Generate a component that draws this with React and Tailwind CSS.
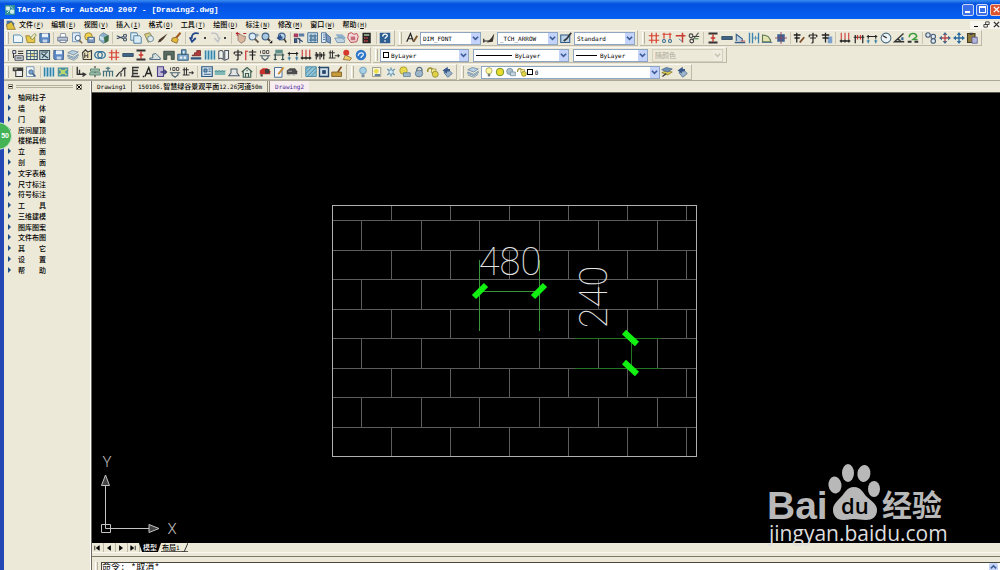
import React, { useState } from "react";

const ICONS = {
    file: <path d="M2 4h9l3 3v7H2z" fill="#eef6fb" stroke="#5d8fb5" strokeWidth="1.3" />,
    open: (
        <>
            <path d="M1 5h5l1 2h6v7H3z" fill="#e8c84a" stroke="#8a7526" />
            <path d="M7 8l6-6 2 2-5 6z" fill="#f7f2c8" stroke="#6b7a3a" />
        </>
    ),
    save: (
        <>
            <path d="M1 2h13v12H2l-1-1z" fill="#5d8ac4" stroke="#2f5486" />
            <path d="M4 2h8v5H4z" fill="#e9f1fa" />
            <path d="M5 10h6v4H5z" fill="#c5d4e8" />
        </>
    ),
    print: (
        <>
            <path d="M5 2h6l1 5H4z" fill="#fff" stroke="#6c7d95" />
            <path d="M1 7h13v5H1z" fill="#b9c3d4" stroke="#596a86" />
            <path d="M4 11h8v3H4z" fill="#f3f3f3" stroke="#596a86" />
        </>
    ),
    preview: (
        <>
            <path d="M2 1h10v12H2z" fill="#dcebf7" stroke="#5b7fa6" />
            <circle cx="9" cy="8" r="3.5" fill="#f5fbff" stroke="#45668c" strokeWidth="1.3" />
            <path d="M11 11l4 4" stroke="#7a6a3c" strokeWidth="2" />
        </>
    ),
    publish: (
        <>
            <circle cx="6" cy="6" r="5" fill="#f0d24e" stroke="#86712a" />
            <path d="M5 7h9v7H5z" fill="#7c99bd" stroke="#3d587d" />
            <path d="M7 9h5" stroke="#fff" strokeWidth="1.5" />
        </>
    ),
    globe: (
        <>
            <path d="M7 1l7 4-1 7-6 3-5-4V5z" fill="#8fb1c9" stroke="#567f9b" />
            <path d="M8 7l6-3v8l-5 3z" fill="#3c6f4c" />
            <path d="M2 5l5 2 1 4-5-1z" fill="#cfe3ef" />
        </>
    ),
    cut: (
        <g fill="none" stroke="#3c4d66" strokeWidth="1.5">
            <path d="M1 5l9 4M1 9l9-3" />
            <circle cx="12" cy="5" r="2" />
            <circle cx="12" cy="10" r="2" />
        </g>
    ),
    copy: (
        <g fill="#d9ebf5" stroke="#47789c" strokeWidth="1.2">
            <path d="M1 1h8l1 2v8H1z" />
            <path d="M5 5h8l2 2v8H5z" />
        </g>
    ),
    paste: (
        <>
            <path d="M2 3l7-2 5 8-7 5z" fill="#d8cf86" stroke="#7c7442" />
            <circle cx="10" cy="9" r="4" fill="#dfe9ee" stroke="#56798c" />
        </>
    ),
    brush: <path d="M14 2l-5 7-4 4-4 1 2-4 4-3z" fill="#4a3a2a" />,
    match: (
        <>
            <path d="M14 1l-6 7" stroke="#a0571f" strokeWidth="2.6" />
            <path d="M3 8l5-1 3 3-2 5-7-3z" fill="#e1b93b" stroke="#865a1f" />
        </>
    ),
    undo: <path d="M13 2C6 0 3 4 4 9M1 7l3 6 5-5" fill="none" stroke="#24478c" strokeWidth="2.4" />,
    redo: <path d="M3 2c7-2 10 2 9 7M15 7l-3 6-5-5" fill="none" stroke="#bdbfc6" strokeWidth="1.8" />,
    pan: (
        <>
            <path d="M4 4l3-1 3 2 4 1-1 6-5 3-4-4z" fill="#d9b9a0" stroke="#8b6a62" />
            <path d="M1 2h5M3 0v5M11 2h4" stroke="#b2292e" strokeWidth="1.6" />
        </>
    ),
    zoom: (
        <>
            <circle cx="6" cy="6" r="4.5" fill="#d8eaf6" stroke="#56789b" strokeWidth="1.5" />
            <path d="M9 9l5 5" stroke="#6a5a4c" strokeWidth="2.4" />
            <path d="M12 2v5M10 4h5" stroke="#56789b" />
        </>
    ),
    zoomWin: (
        <>
            <circle cx="6" cy="6" r="4.5" fill="#a9c7e0" stroke="#3f6289" strokeWidth="1.5" />
            <path d="M9 9l3 3" stroke="#4a4035" strokeWidth="2.4" />
            <path d="M15 11v4h-4z" fill="#111" />
        </>
    ),
    zoomPrev: (
        <>
            <circle cx="9" cy="6" r="4.5" fill="#b9d3e7" stroke="#3f6289" strokeWidth="1.5" />
            <path d="M12 9l3 5" stroke="#4a4035" strokeWidth="2" />
            <path d="M8 3L2 8l5 4V9h3V6H8z" fill="#2c4f8c" />
        </>
    ),
    props: (
        <>
            <path d="M1 2h6v5H1z" fill="#a63a5f" />
            <path d="M8 2h7v4H8z" fill="#5d7ca8" />
            <path d="M2 9h3v5H2zM6 8l7 5M9 8v7" fill="#47628a" stroke="#30486d" strokeWidth="1.4" />
        </>
    ),
    design: (
        <g stroke="#3e6c8f" strokeWidth="1.2" fill="#cde2ee">
            <path d="M1 1h13v13H1z" />
            <path d="M4 4h3v3H4zM9 4h3v3H9zM4 9h3v3H4zM9 9h3v3H9z" fill="#7ba1bd" />
        </g>
    ),
    palette: (
        <>
            <path d="M2 1h6v13H2z" fill="#dbe8f2" stroke="#385d8c" />
            <path d="M8 2l6 5v8l-5-2z" fill="#7996bd" stroke="#385d8c" />
            <path d="M4 4h3M4 7h3M4 10h3" stroke="#385d8c" />
        </>
    ),
    sheets: (
        <>
            <path d="M2 3h9l4 4v3H7z" fill="#8fb0cb" />
            <path d="M1 8h10l3 3v3H4z" fill="#c0d3e1" stroke="#6a8daa" />
        </>
    ),
    markup: (
        <>
            <path d="M2 2l4-1 3 2 4-1 2 4-2 7-8 1-4-6z" fill="#f3d9da" stroke="#bb4a50" strokeWidth="1.3" />
            <path d="M5 6h6v5H5z" fill="#c66e78" />
        </>
    ),
    calc: (
        <>
            <path d="M2 1h11v14H2z" fill="#242424" />
            <path d="M4 3h7v2H4z" fill="#a7c8a4" />
            <path d="M4 7h2v2H4zM7 7h2v2H7zM4 11h2v2H4zM7 11h2v2H7z" fill="#d24545" />
        </>
    ),
    help: (
        <>
            <path d="M1 1h14v14H1z" fill="#2d5f92" />
            <path d="M5 6c0-4 6-4 6-1 0 2-3 2-3 4M8 11v2" fill="none" stroke="#fff" strokeWidth="1.8" />
        </>
    ),
    fontStyle: (
        <>
            <path d="M1 13L6 2l4 11M3 9h6" fill="none" stroke="#222" strokeWidth="1.6" />
            <path d="M15 5l-5 8" stroke="#7a5830" strokeWidth="2.4" />
        </>
    ),
    dimStyle: (
        <>
            <path d="M1 12h7M1 9v5" stroke="#222" strokeWidth="1.6" />
            <path d="M15 2l-4 6-6 6 8-1 1-5z" fill="#3a332c" />
        </>
    ),
    tableStyle: (
        <>
            <path d="M1 4h12v10H1z" fill="#bcd3e8" stroke="#2f5a87" strokeWidth="1.4" />
            <path d="M15 1l-6 8-4 3" fill="none" stroke="#333" strokeWidth="2.2" />
        </>
    ),
    grid: <path d="M5 1v14M11 1v14M1 5h14M1 11h14" stroke="#d8402f" strokeWidth="1.6" />,
    gridDim: (
        <>
            <path d="M2 3h12M4 1v8M12 1v8" stroke="#d8402f" strokeWidth="1.6" />
            <circle cx="4" cy="12" r="2" fill="none" stroke="#356b94" strokeWidth="1.4" />
            <circle cx="12" cy="12" r="2" fill="none" stroke="#356b94" strokeWidth="1.4" />
        </>
    ),
    gridAdd: (
        <>
            <path d="M1 5h13M10 1v13" stroke="#c93a2f" strokeWidth="2" />
            <path d="M5 9l5 4" stroke="#356b94" />
        </>
    ),
    gridCut: (
        <g fill="none" stroke="#444" strokeWidth="1.5">
            <circle cx="4" cy="5" r="2.5" />
            <circle cx="5" cy="12" r="2.5" />
            <path d="M14 1L6 11M6 6h9" />
            <path d="M9 9h5" stroke="#3e8a4a" />
        </g>
    ),
    column: (
        <>
            <path d="M2 2h12M2 14h12" stroke="#333" strokeWidth="2.4" />
            <path d="M8 3v10M5 8h6" stroke="#c8342c" strokeWidth="1.8" />
        </>
    ),
    wall: <path d="M1 6h14v4H1z" fill="#3f6488" stroke="#263f58" />,
    door: (
        <>
            <path d="M1 13h14v2H1z" fill="#355d86" />
            <path d="M3 12V3l8 6v3" fill="#bdd1e4" stroke="#355d86" strokeWidth="1.4" />
            <path d="M9 12h6" stroke="#c33" />
        </>
    ),
    winH: (
        <>
            <path d="M2 1v14M6 1v14M14 1v14" stroke="#3d84b0" strokeWidth="1.8" />
            <path d="M6 8h8M10 5v6" stroke="#3d84b0" />
        </>
    ),
    arc: (
        <>
            <path d="M2 13V4c6 0 10 3 11 9z" fill="#e3e4b0" stroke="#5d7a54" strokeWidth="1.5" />
            <path d="M1 14h14" stroke="#355d86" />
        </>
    ),
    block: (
        <>
            <path d="M3 3h10v10H3z" fill="#3b6295" />
            <path d="M8 0v16M0 8h16" stroke="#8b4560" strokeWidth="1.2" />
        </>
    ),
    charPen: (
        <>
            <path d="M1 4h9M5 1v13M2 8h7" stroke="#222" strokeWidth="1.7" />
            <path d="M15 7l-6 7" stroke="#7a4a22" strokeWidth="2.4" />
        </>
    ),
    charZi: <path d="M3 4h10M8 1v13l-2 1M4 8h8M3 4v3M13 4v3" fill="none" stroke="#222" strokeWidth="1.6" />,
    charDoc: (
        <>
            <path d="M9 6h6v9H9z" fill="#7ca1cc" />
            <path d="M1 4h10M6 1v13M2 8h8" stroke="#222" strokeWidth="1.7" />
        </>
    ),
    axisDim: (
        <>
            <path d="M3 1v9M8 1v9M13 1v9" stroke="#c33" strokeWidth="1.4" />
            <path d="M1 12h14M3 10v4M8 10v4M13 10v4" stroke="#222" strokeWidth="1.7" />
        </>
    ),
    dimRed: (
        <>
            <path d="M1 7h14M3 4v11M13 4v11" stroke="#222" strokeWidth="1.6" />
            <path d="M6 4v6M10 4v6" stroke="#c33" strokeWidth="1.6" />
        </>
    ),
    dim: (
        <>
            <path d="M1 6h14M3 4v5M13 4v5" stroke="#222" strokeWidth="1.5" />
            <path d="M1 12h4M11 12h4M3 10v5M13 10v5" stroke="#357ba0" strokeWidth="1.6" />
        </>
    ),
    radius: (
        <>
            <circle cx="8" cy="8" r="6.5" fill="#edf4f7" stroke="#4d6c81" strokeWidth="1.4" />
            <path d="M4 5l5 3" stroke="#222" strokeWidth="1.6" />
        </>
    ),
    angle: (
        <>
            <path d="M14 2L2 13h13M6 10c3 0 4 2 4 4" fill="none" stroke="#333" strokeWidth="1.8" />
            <path d="M11 7h3v4h-3z" fill="#356b94" />
        </>
    ),
    refresh: (
        <>
            <path d="M3 7c0-6 9-7 10-1l-5 4h6" fill="none" stroke="#3b9c3d" strokeWidth="2" />
            <path d="M1 13h5M10 13h5" stroke="#333" strokeWidth="2.4" />
        </>
    ),
    circles: (
        <g fill="#e2e8ee" stroke="#465e79" strokeWidth="1.5">
            <circle cx="4" cy="4" r="3" />
            <circle cx="11" cy="6" r="3" />
            <circle cx="11" cy="12" r="3" />
        </g>
    ),
    moveRed: (
        <>
            <path d="M8 0l3 4H5zM8 16l3-4H5zM0 8l4-3v6zM16 8l-4-3v6z" fill="#356b94" />
            <path d="M8 3v10M3 8h10" stroke="#b94a50" strokeWidth="1.8" />
        </>
    ),
    moveBlue: (
        <>
            <path d="M8 0l3 4H5zM8 16l3-4H5zM0 8l4-3v6zM16 8l-4-3v6z" fill="#2a6a9e" />
            <path d="M8 3v10M3 8h10" stroke="#2a6a9e" strokeWidth="1.8" />
        </>
    ),
    clipboard: (
        <>
            <path d="M2 2h10v12H2z" fill="#8c7a3f" stroke="#463d23" strokeWidth="1.4" />
            <path d="M5 1h4v3H5z" fill="#444" />
            <path d="M8 7h7v8H8z" fill="#b3b6dc" stroke="#50548a" />
        </>
    ),
    list: (
        <>
            <path d="M1 2h4v4H1zM4 9h11v6H4z" fill="#dce6ee" stroke="#445" strokeWidth="1.3" />
            <path d="M8 3h7M8 6h7M6 12h7M2 6v6" stroke="#333" strokeWidth="1.4" />
        </>
    ),
    table: (
        <>
            <path d="M1 2h14v12H1z" fill="#e4efd5" stroke="#34506d" strokeWidth="1.5" />
            <path d="M6 2v12M11 2v12M1 6h14M1 10h14" stroke="#34506d" />
            <path d="M7 7h3v2H7z" fill="#d0b93c" />
        </>
    ),
    chart: (
        <>
            <path d="M1 2h13v12H1z" fill="#c2d8dd" stroke="#3a5060" strokeWidth="1.5" />
            <path d="M3 6l9 6M4 12l6-7M3 4h9" stroke="#2c4453" strokeWidth="1.5" />
        </>
    ),
    layers: (
        <g fill="#b9d0e2" stroke="#6484a1">
            <path d="M1 5l6-3 8 2-6 4z" />
            <path d="M1 8l8 3 6-4v2l-6 4-8-3z" />
            <path d="M1 12l8 3 6-4" fill="none" />
        </g>
    ),
    note: (
        <>
            <path d="M2 5l4-4 3 3 5-2v12H3z" fill="#ece0b6" stroke="#3d3d3d" strokeWidth="1.5" />
            <path d="M5 5v7M9 6v6M5 9h4" stroke="#3d3d3d" strokeWidth="1.3" />
        </>
    ),
    rings: (
        <g fill="none" stroke="#2b6c9a" strokeWidth="1.7">
            <ellipse cx="6" cy="8" rx="5" ry="4.5" />
            <ellipse cx="10" cy="8" rx="5" ry="4.5" />
        </g>
    ),
    section: <path d="M1 12h4V7l4-1 3 3 3 3v2H1z" fill="#d6e0df" stroke="#4d6a7d" strokeWidth="1.3" />,
    gate: <path d="M1 3h14v11h-4V8H5v6H1z" fill="#586b60" stroke="#2f3d35" />,
    house: (
        <>
            <path d="M1 7h14v8H1zM6 1h6v6H6z" fill="#83abc9" stroke="#36617f" strokeWidth="1.3" />
            <path d="M4 10h3v3H4zM9 10h3v3H9zM8 3h2v3H8z" fill="#e9f2f7" />
        </>
    ),
    stairs: (
        <>
            <path d="M1 11h14v3H1z" fill="#31557f" />
            <path d="M3 8h3V5h3V2h5v7H3z" fill="#b03a38" stroke="#6d2324" />
        </>
    ),
    columns: (
        <>
            <path d="M1 2h14v12H1z" fill="#a9d0e0" />
            <path d="M2 2v12M6 2v12M10 2v12M14 2v12" stroke="#3682a5" strokeWidth="1.7" />
        </>
    ),
    book: <path d="M1 3c3-2 5-1 6 1v10c-2-2-4-2-6-1zM9 2h5v11l-5 2z" fill="#eef0ee" stroke="#4c5662" strokeWidth="1.4" />,
    charTag: (
        <>
            <path d="M1 2v13M1 3h3" stroke="#c33" strokeWidth="1.6" />
            <path d="M5 4h10M10 1v14M6 8h8" stroke="#222" strokeWidth="1.6" />
        </>
    ),
    dimHund: (
        <>
            <path d="M2 2v4M5 2h3v4H5zM10 2h3v4h-3z" fill="none" stroke="#555" strokeWidth="1.3" />
            <path d="M1 9h14M4 9v3l4 3 4-3V9" fill="none" stroke="#4a6070" strokeWidth="1.5" />
        </>
    ),
    dimWin: (
        <>
            <path d="M3 1h10v5H3z" fill="#5e8f8a" />
            <path d="M1 8h14M3 6v9M13 6v9M1 14h4M11 14h4" stroke="#2e4d4b" strokeWidth="1.6" />
        </>
    ),
    dimRow: <path d="M1 8h14M3 4v10M8 4v10M13 4v10M5 6v5M10 6v5" stroke="#222" strokeWidth="1.5" />,
    leader: <path d="M1 5h8M3 2v10M6 2v10M1 12h9M9 9h6M13 7l2 2-2 2" fill="none" stroke="#333" strokeWidth="1.4" />,
    lamp: (
        <>
            <circle cx="7" cy="5" r="4" fill="#d7392c" />
            <path d="M6 8l8 4-2 3-9-1z" fill="#e9cf6a" stroke="#8c5a2b" />
        </>
    ),
    helpBall: (
        <>
            <circle cx="8" cy="8" r="7" fill="#2f76c8" />
            <path d="M4 9c2-6 8-4 7-1-1 2-3 1-3 4" fill="none" stroke="#e7f2fc" strokeWidth="1.7" />
        </>
    ),
    camera: (
        <>
            <path d="M1 2h14v5H1z" fill="#3a3a3a" />
            <path d="M5 6h9v8H5z" fill="#eee" stroke="#3a3a3a" strokeWidth="1.4" />
            <path d="M3 4h4" stroke="#e9e3c9" strokeWidth="1.4" />
        </>
    ),
    findDoc: (
        <>
            <path d="M2 1h10v13H2z" fill="#f4f8fb" stroke="#5a7ba0" />
            <circle cx="8" cy="8" r="3" fill="#77a3cc" stroke="#345a82" />
            <path d="M10 10l4 4" stroke="#345a82" strokeWidth="2" />
        </>
    ),
    star: (
        <>
            <path d="M1 2h14v12H1z" fill="#4d93a6" />
            <path d="M3 4l10 8M13 4L3 12" stroke="#d9e46c" strokeWidth="1.4" />
            <circle cx="8" cy="8" r="3" fill="#b6d86c" />
        </>
    ),
    coord: <path d="M3 1v10h10M6 5v6M10 9l4 2-4 3" fill="none" stroke="#333" strokeWidth="1.8" />,
    level: (
        <>
            <path d="M8 0v16" stroke="#333" strokeDasharray="3 1" strokeWidth="1.4" />
            <path d="M2 4h12v3H2zM1 9h14v3H1z" fill="#a8cbb8" stroke="#42735e" />
        </>
    ),
    comb: <path d="M1 7h14M2 7v7M6 7v7M10 7v7M14 7v7M8 1v6M5 3h6" stroke="#41707c" strokeWidth="1.6" />,
    slope: <path d="M1 14c3 0 3-5 6-6 3 0 3-5 7-6M8 9v5M13 3v11M10 3h5" fill="none" stroke="#333" strokeWidth="1.6" />,
    charE: <path d="M4 2h9M5 2v13M5 6h7M5 10h7M3 14h11" stroke="#333" strokeWidth="1.7" />,
    charA: <path d="M4 14L9 2l4 12M6 10h6M1 14h2" fill="none" stroke="#222" strokeWidth="1.8" />,
    exit: (
        <>
            <path d="M2 1h8v13H2z" fill="#c2b8d9" stroke="#4e4586" strokeWidth="1.5" />
            <path d="M6 8h8M11 5l3 3-3 3" fill="none" stroke="#3f3a7c" strokeWidth="1.7" />
        </>
    ),
    plan: (
        <>
            <path d="M1 1h14v13H1z" fill="#d3e2ee" stroke="#2d5a82" strokeWidth="1.6" />
            <path d="M4 4h4v4H4zM10 4h3M10 7h3M4 11h9" fill="#7fa5c4" stroke="#2d5a82" strokeWidth="1.3" />
        </>
    ),
    wave: (
        <>
            <path d="M1 6h14v6H1z" fill="#7fb9b6" />
            <path d="M1 8l2-2 2 2 2-2 2 2 2-2 2 2 2-2" fill="none" stroke="#3b7c80" />
        </>
    ),
    roof: <path d="M4 4h8v5l3 4H1l3-4z" fill="#e3e6e2" stroke="#4a5c6c" strokeWidth="1.4" />,
    home: <path d="M1 8l7-6 7 6M3 7v8h10V7M6 15v-5h4v5M8 5v2" fill="#e3ebe6" stroke="#3d5d4f" strokeWidth="1.5" />,
    car: (
        <>
            <path d="M1 6l4-3h6l4 4v4H1z" fill="#c8322c" />
            <path d="M8 4h6v6H8z" fill="#3d3d3d" />
            <path d="M2 11h3v3H2z" fill="#444" />
        </>
    ),
    edit: (
        <>
            <path d="M2 2h10v13H2z" fill="#f2f6fa" stroke="#4d7096" strokeWidth="1.3" />
            <path d="M14 2l-7 9" stroke="#c98b35" strokeWidth="2.6" />
        </>
    ),
    carDark: (
        <>
            <path d="M1 6l4-3h7l3 4v4H1z" fill="#4d4d4d" />
            <path d="M3 7h5M2 12h3M9 12h3" stroke="#a4a4a4" strokeWidth="1.6" />
        </>
    ),
    hatch: (
        <>
            <path d="M1 1h14v13H1z" fill="#8fc3d6" stroke="#3b7b9a" />
            <path d="M1 5l4-4M1 10l9-9M3 14L15 2M8 14l7-7" stroke="#3b7b9a" />
        </>
    ),
    frame: (
        <>
            <path d="M2 2h12v12H2z" fill="#cfe0ea" stroke="#27496b" strokeWidth="1.8" />
            <path d="M6 6h4v4H6zM0 2h4M2 0v4" fill="#27496b" stroke="#27496b" />
        </>
    ),
    sweep: (
        <>
            <path d="M14 1l-5 7" stroke="#7b4a1c" strokeWidth="2" />
            <path d="M1 8h13v6H1z" fill="#c59a3b" stroke="#74531c" />
        </>
    ),
    bulbBlue: (
        <>
            <circle cx="8" cy="6" r="4.5" fill="#a5d0e6" stroke="#5f92ad" />
            <path d="M6 11h4v4H6z" fill="#7c95a6" />
        </>
    ),
    bulbDoc: (
        <>
            <path d="M2 2h11v12H2z" fill="#f7f6ea" stroke="#85856a" />
            <circle cx="7" cy="7" r="3.3" fill="#eadf4a" />
            <path d="M5 12h7" stroke="#355d86" strokeWidth="2" />
        </>
    ),
    freeze: (
        <>
            <path d="M8 2v12M3 4l10 8M13 4L3 12" stroke="#5a8fb2" strokeWidth="1.6" />
            <circle cx="8" cy="8" r="3" fill="#d9eaf3" stroke="#5a8fb2" />
        </>
    ),
    sunLayer: (
        <>
            <circle cx="6" cy="6" r="5" fill="#e8d94c" stroke="#9b8f2b" />
            <path d="M6 9h9v5H6z" fill="#9fb9cc" stroke="#5d7c93" />
        </>
    ),
    vpLayer: (
        <>
            <circle cx="6" cy="7" r="5" fill="#a9bfca" stroke="#5b7a8a" />
            <path d="M7 8h8v6H7z" fill="#c9d8e0" stroke="#5b7a8a" />
        </>
    ),
    lock: (
        <>
            <path d="M5 7c-1-7 8-7 7 0" fill="none" stroke="#566f86" strokeWidth="1.8" />
            <ellipse cx="8" cy="10" rx="5" ry="4.5" fill="#9db7ca" stroke="#566f86" />
        </>
    ),
    unlock: (
        <>
            <path d="M1 8c-1-7 7-7 7-1" fill="none" stroke="#9b8f2b" strokeWidth="2" />
            <path d="M6 4h6v5H6z" fill="#f0e892" stroke="#9b8f2b" />
            <ellipse cx="11" cy="11" rx="4" ry="4" fill="#e0d246" stroke="#8d822b" />
        </>
    ),
    layerPrev: (
        <>
            <path d="M4 9l7-3 4 4-6 5z" fill="#9bb4cb" stroke="#47678b" />
            <path d="M9 1L2 6l6 4V7h4V4H9z" fill="#39598a" />
        </>
    ),
    layerSet: (
        <>
            <path d="M1 9l6-3 8 2-6 4z" fill="#d8c84c" stroke="#877a2f" />
            <path d="M1 5l6-3 8 2-6 4z" fill="#6e90b5" stroke="#46678b" />
            <path d="M2 14l5-4" stroke="#333" strokeWidth="1.6" />
        </>
    ),
    bulbOn: (
        <>
            <circle cx="8" cy="6" r="5" fill="#fbf7a0" stroke="#8c873a" />
            <path d="M6 11h4v4H6z" fill="#777" />
        </>
    ),
    sun: <circle cx="8" cy="8" r="6" fill="#e9dc2c" stroke="#6f8a26" strokeWidth="1.5" />,
};

const STANDARD =
    "file open save | print preview publish globe | cut copy paste brush match | undo . redo . | pan zoom zoomWin zoomPrev | props design palette sheets markup calc | help";
const TARCH_SHORTCUTS =
    "grid gridDim gridAdd gridCut | column wall door winH arc block | charPen charZi charDoc | axisDim dimRed dim radius angle refresh | circles moveRed moveBlue clipboard";
const TARCH_COMMON =
    "list table chart save layers note rings grid wall column section gate house stairs columns book charZi charTag dimHund dimWin dim axisDim dimRow leader lamp helpBall";
const TARCH_EXTRA =
    "camera findDoc | columns star | coord level comb slope charE charA exit dimHund leader | plan wave roof home | car edit carDark | hatch frame sweep";
const LAYER_TOOLS = "bulbBlue bulbDoc freeze sunLayer lock unlock layerPrev";

const MENUS = [
    ["文件", "F"],
    ["编辑", "E"],
    ["视图", "V"],
    ["插入", "I"],
    ["格式", "O"],
    ["工具", "T"],
    ["绘图", "D"],
    ["标注", "N"],
    ["修改", "M"],
    ["窗口", "W"],
    ["帮助", "H"],
];

const TREE = [
    "轴网柱子",
    "墙　　体",
    "门　　窗",
    "房间屋顶",
    "楼梯其他",
    "立　　面",
    "剖　　面",
    "文字表格",
    "尺寸标注",
    "符号标注",
    "工　　具",
    "三维建模",
    "图库图案",
    "文件布图",
    "其　　它",
    "设　　置",
    "帮　　助",
];

const DRAWINGS = ["Drawing1", "150106.智慧绿谷景观平面12.26河道50m", "Drawing2"];

// Latin runs are half as wide as the Chinese ones, as in the system bitmap font
const Text = ({ children }) =>
    children.split(/([\u3000-\u9fff]+)/).map((part, i) =>
        i % 2 ? (
            <span key={i} className="font-['Noto_Sans_CJK_SC',sans-serif] text-[7px] leading-[9px] font-medium">
                {part}
            </span>
        ) : (
            <span key={i} className="font-['DejaVu_Sans_Mono',monospace] text-[6px] leading-[9px]">
                {part}
            </span>
        )
    );

const Icon = ({ name }) => (
    <svg viewBox="0 0 16 16" className="h-3 w-3 shrink-0">
        {ICONS[name]}
    </svg>
);

const Tool = ({ name }) => (
    <button type="button" aria-label={name} className="flex h-full min-w-0 flex-1 items-center justify-center">
        <Icon name={name} />
    </button>
);

const Tools = ({ items }) => (
    <div className="flex min-w-0 flex-1 items-center self-stretch">
        {items.split(" ").map((name, i) => {
            if (name === "|") return <span key={i} className="mx-[2px] h-3 w-px shrink-0 bg-[#c9c5b2]" />;
            if (name === ".")
                return (
                    <button key={i} type="button" aria-label="history" className="w-[7px] shrink-0 text-center">
                        <span className="mx-auto block h-[2px] w-[2px] bg-[#444]" />
                    </button>
                );
            return <Tool key={i} name={name} />;
        })}
    </div>
);

const Toolbar = ({ className, children }) => (
    <div
        className={`flex h-4 shrink-0 items-center border-r border-b border-[#bdb9a6] border-t border-t-[#f8f7f0] pr-[2px] ${className}`}
    >
        <span className="mx-[2px] h-3 w-[3px] shrink-0 border-x border-l-white border-r-[#b5b19e]" />
        {children}
    </div>
);

const Select = ({ label, value, className, prefix, disabled }) => (
    <label
        className={`flex h-[13px] items-center border pl-[2px] ${
            disabled ? "border-[#d2cfbd] bg-[#ece9d8] text-[#aca899]" : "border-[#8fa6c2] bg-white text-black"
        } ${className}`}
    >
        {prefix}
        <select
            aria-label={label}
            disabled={disabled}
            className={`h-full min-w-0 flex-1 appearance-none bg-transparent ${
                disabled
                    ? "font-['Noto_Sans_CJK_SC',sans-serif] text-[7px]"
                    : "font-['DejaVu_Sans_Mono',monospace] text-[6px]"
            }`}
        >
            <option>{value}</option>
        </select>
        <span
            className={`flex h-full w-[9px] items-center justify-center ${disabled ? "bg-[#efecdf]" : "bg-[#c3d3fb]"}`}
        >
            <svg viewBox="0 0 8 8" className="h-[7px] w-[7px]">
                <path d="M1 2l3 3 3-3" fill="none" stroke={disabled ? "#c9c5b2" : "#3c5a94"} strokeWidth="1.8" />
            </svg>
        </span>
    </label>
);

const Swatch = () => <span className="mr-[2px] h-[6px] w-[6px] shrink-0 border border-black bg-white" />;

const Line = ({ className }) => <span className={`mr-[3px] h-px shrink-0 bg-black ${className}`} />;

const TitleBar = () => (
    <header className="flex h-[19px] shrink-0 items-center bg-linear-to-b from-[#3a8df0] via-[#0551e0] via-20% to-[#0660f4] pl-[5px]">
        <svg viewBox="0 0 16 16" className="h-[10px] w-[10px]">
            <path d="M0 0h16v16H0z" fill="#2f8f9a" />
            <path d="M2 3h5v5H2zM9 8h5v5H9zM9 2l4 4M3 13l4-4" fill="#d6efe9" stroke="#d6efe9" strokeWidth="1.5" />
        </svg>
        <h1 className="ml-[2px] flex-1 pt-px font-['Liberation_Mono',monospace] text-[8px] font-bold text-white">
            TArch7.5 For AutoCAD 2007 - [Drawing2.dwg]
        </h1>
        <div className="flex gap-[2px] overflow-hidden">
            <button type="button" aria-label="Minimize" className="h-3 w-3 rounded-[2px] border border-[#c5d8fb] bg-[#3b6fe8]">
                <span className="mt-[5px] ml-[2px] block h-[2px] w-[5px] bg-white" />
            </button>
            <button
                type="button"
                aria-label="Maximize"
                className="flex h-3 w-3 items-center justify-center rounded-[2px] border border-[#c5d8fb] bg-[#3b6fe8]"
            >
                <span className="h-[7px] w-[7px] border border-t-2 border-white" />
            </button>
            <button
                type="button"
                aria-label="Close"
                className="-mr-[2px] flex h-3 w-3 items-center justify-center rounded-[2px] border border-[#f0c5b8] bg-[#dc5330]"
            >
                <svg viewBox="0 0 8 8" className="h-[7px] w-[7px]">
                    <path d="M1 1l6 6M7 1L1 7" stroke="#fff" strokeWidth="1.6" />
                </svg>
            </button>
        </div>
    </header>
);

const MenuBar = () => (
    <nav className="flex h-[11px] shrink-0 items-center pl-[2px]">
        <svg viewBox="0 0 16 16" className="mr-[3px] h-[10px] w-[10px]">
            <path d="M1 1h8l4 4v6H1z" fill="#3f74b8" />
            <path d="M1 7l8-4 6 12H2z" fill="#e0c23c" stroke="#7c5a2a" />
        </svg>
        <div className="flex w-[356px]">
            {MENUS.map(([label, key]) => (
                <button
                    key={key}
                    type="button"
                    className="flex-1 text-left font-['Noto_Sans_CJK_SC',sans-serif] text-[7px] leading-[10px] font-medium whitespace-nowrap"
                >
                    {label}
                    <span className="font-['DejaVu_Sans_Mono',monospace] text-[6px] font-normal">
                        (<u>{key}</u>)
                    </span>
                </button>
            ))}
        </div>
        <div className="ml-auto flex">
            <button type="button" aria-label="Minimize drawing" className="h-2 w-[11px] bg-[#f6f5ee]">
                <span className="mx-auto mt-[4px] block h-px w-1 bg-black" />
            </button>
            <button type="button" aria-label="Restore drawing" className="flex h-2 w-[11px] justify-center bg-[#f6f5ee]">
                <svg viewBox="0 0 8 8" className="h-[7px] w-[7px]">
                    <path d="M3 1h4v3H3zM1 4h4v3H1z" fill="#f6f5ee" stroke="#333" />
                </svg>
            </button>
            <button type="button" aria-label="Close drawing" className="flex h-2 w-2 justify-center bg-[#f6f5ee]">
                <svg viewBox="0 0 8 8" className="h-[7px] w-[7px]">
                    <path d="M1 1l6 6M7 1L1 7" stroke="#333" strokeWidth="1.6" />
                </svg>
            </button>
        </div>
    </nav>
);

const Sidebar = () => (
    <aside className="flex w-[87px] shrink-0 flex-col border-r border-white">
        <div className="flex h-[11px] items-center gap-[3px] px-1">
            <button type="button" aria-label="Collapse" className="flex h-[5px] w-[5px] items-center justify-center border border-[#8c8978]">
                <span className="h-px w-[3px] bg-black" />
            </button>
            <span className="h-[3px] flex-1 border-y border-[#b5b19e]" />
            <button type="button" aria-label="Close panel" className="mr-1 h-[6px] w-[6px] border border-[#8c8978]">
                <svg viewBox="0 0 4 4" className="h-1 w-1">
                    <path d="M0 0l4 4M4 0L0 4" stroke="#000" />
                </svg>
            </button>
        </div>
        <ul className="flex h-[183px] flex-col">
            {TREE.map((item) => (
                <li key={item} className="flex min-h-0 flex-1 items-center">
                    <button
                        type="button"
                        className="flex items-center gap-[7px] pl-[4px] font-['Noto_Sans_CJK_SC',sans-serif] text-[7px] leading-[10px] font-medium whitespace-pre"
                    >
                        <svg viewBox="0 0 3 6" className="h-[6px] w-[3px]">
                            <path d="M0 0l3 3-3 3z" fill="#1f4e86" />
                        </svg>
                        {item}
                    </button>
                </li>
            ))}
        </ul>
    </aside>
);

const DrawingTabs = () => {
    const [active, setActive] = useState("Drawing2");
    return (
        <div className="flex h-[12px] shrink-0 items-stretch gap-px border-b border-[#5c5a50]">
            {DRAWINGS.map((name) => (
                <button
                    key={name}
                    type="button"
                    onClick={() => setActive(name)}
                    className={`flex items-center px-[5px] whitespace-nowrap ${
                        name === active
                            ? "border-l border-[#8c8978] bg-[#f8eef0] text-[#4a1fa0]"
                            : "border-r border-[#8c8978] bg-[#ece9d8] text-black"
                    }`}
                >
                    <Text>{name}</Text>
                </button>
            ))}
        </div>
    );
};

const ROWS = [205, 220, 250, 279, 309, 338, 368, 397, 427, 457];
const EVEN_JOINTS = [391, 450, 509, 568, 627, 686];
const ODD_JOINTS = [361, 421, 479, 539, 598, 657];

const BrickDrawing = () => (
    <svg viewBox="332 205 366 253" className="absolute top-[112px] left-[240px] h-[253px] w-[366px]">
        <g stroke="#5c5c5c" shapeRendering="crispEdges">
            {ROWS.slice(1, -1).map((y) => (
                <line key={y} x1="332" x2="697" y1={y} y2={y} />
            ))}
            {ROWS.slice(0, -1).map((y, i) =>
                (i % 2 ? ODD_JOINTS : EVEN_JOINTS).map((x) => (
                    <line key={`${x}-${y}`} x1={x} x2={x} y1={y} y2={ROWS[i + 1]} />
                ))
            )}
        </g>
        <rect x="332.5" y="205.5" width="364" height="251" fill="none" stroke="#b0b0b0" />
        <g fill="none" stroke="#3a943a" shapeRendering="crispEdges">
            <path d="M479 260v71M539 260v71M479 291h60" />
            <path d="M575 338h86M575 368h86M631 338v30" stroke="#237523" />
        </g>
        <path
            d="M474 297l12-12M533 297l12-12M624 332l13 12M624 362l13 12"
            stroke="#12f012"
            strokeWidth="6"
        />
        <g fill="#e4e4e4" textAnchor="middle" className="font-['Roboto',sans-serif] text-[38px] font-thin">
            <text x="510" y="275">
                480
            </text>
            <text transform="translate(607 297) rotate(-90)">240</text>
        </g>
    </svg>
);

const UcsIcon = () => (
    <svg viewBox="98 448 88 94" className="absolute bottom-px left-[6px] h-[94px] w-[88px]">
        <g fill="none" stroke="#c4c4c4">
            <path d="M101.5 524.5h9v8h-9zM105.5 528.5V475M105.5 528.5H159" />
            <path d="M105.5 475l-4 10.500h8zM159 528.500l-10-4v8z" fill="#444" />
        </g>
        <g fill="#c4c4c4" textAnchor="middle" className="font-['Roboto',sans-serif] text-[15px] font-light">
            <text x="107" y="467">
                Y
            </text>
            <text x="172" y="534">
                X
            </text>
        </g>
    </svg>
);

const Watermark = () => (
    <svg viewBox="765 460 184 90" className="pointer-events-none absolute right-[51px] bottom-5 h-[90px] w-[184px]">
        <g fill="#b8b8b8">
            <ellipse cx="835" cy="485" rx="6.5" ry="8.5" transform="rotate(-8 835 485)" />
            <ellipse cx="848" cy="473" rx="6" ry="9" />
            <ellipse cx="864" cy="473.5" rx="6.5" ry="8.5" transform="rotate(8 864 473)" />
            <ellipse cx="874" cy="489" rx="6" ry="8" />
            <path d="M854 487c7 0 9 6 13 10 6 5 10 8 10 13 0 7-5 10-11 10-5 0-8-1-12-1s-6 1-11 1c-6 0-10-4-10-10 0-5 3-8 8-13 4-4 6-10 13-10z" />
            <text x="767" y="519" className="font-['Liberation_Sans',sans-serif] text-[39px] font-bold">
                Bai
            </text>
            <text x="882" y="516" className="font-['Noto_Sans_CJK_SC',sans-serif] text-[30px] font-bold">
                经验
            </text>
        </g>
        <text x="841" y="514" fill="#000" className="font-['Open_Sans',sans-serif] text-[22px] font-semibold">
            du
        </text>
        <text x="769" y="541" fill="#dedede" className="font-['Open_Sans',sans-serif] text-[21px]">
            jingyan.baidu.com
        </text>
    </svg>
);

const NAV = {
    First: "M1 1v6M7 1L3 4l4 3z",
    Previous: "M6 1L2 4l4 3z",
    Next: "M2 1l4 3-4 3z",
    Last: "M7 1v6M1 1l4 3-4 3z",
};

const LayoutTabs = () => (
    <div className="flex h-[9px] shrink-0 items-stretch">
        {Object.entries(NAV).map(([name, d]) => (
            <button
                key={name}
                type="button"
                aria-label={name}
                className="flex w-[12px] items-center justify-center border-r border-[#bdb9a6] pr-[2px]"
            >
                <svg viewBox="0 0 8 8" className="h-[6px] w-[6px]">
                    <path d={d} stroke="#000" />
                </svg>
            </button>
        ))}
        <button
            type="button"
            className="-ml-px flex h-[9px] w-[22px] items-center justify-center bg-black text-white [clip-path:polygon(0_0,100%_0,86%_100%,14%_100%)]"
        >
            <Text>模型</Text>
        </button>
        <button type="button" className="flex h-[9px] items-center border-b border-[#5c5a50] pl-px">
            <Text>布局1</Text>
            <svg viewBox="0 0 6 9" className="ml-[2px] h-[9px] w-[6px]">
                <path d="M6 0L2 9H0" fill="none" stroke="#333" />
            </svg>
        </button>
    </div>
);

const CommandLine = () => {
    const [command, setCommand] = useState("命令: *取消*");
    return (
        <div className="flex h-[14px] shrink-0 overflow-hidden border-t border-[#7d7a6c] pt-[5px]">
            <span className="mx-[3px] w-[3px] border-x border-l-white border-r-[#b5b19e]" />
            <div className="flex flex-1 border-t border-l border-[#4a483f] bg-white">
                <input
                    aria-label="命令"
                    value={command}
                    onChange={(e) => setCommand(e.target.value)}
                    className="h-[10px] flex-1 bg-white font-['Liberation_Mono','Noto_Sans_CJK_SC',monospace] text-[9px] leading-[10px] text-black outline-none"
                />
                <button type="button" aria-label="Scroll up" className="mr-[2px] flex h-[10px] w-[9px] justify-center rounded-[2px] bg-[#c3d3fb]">
                    <svg viewBox="0 0 8 8" className="mt-[1px] h-[7px] w-[7px]">
                        <path d="M1 5l3-3 3 3" fill="none" stroke="#3c5a94" strokeWidth="1.8" />
                    </svg>
                </button>
            </div>
        </div>
    );
};

const App = () => (
    <div className="relative flex h-screen flex-col overflow-hidden bg-[#ece9d8] text-black">
        <TitleBar />
        <div className="flex min-h-0 flex-1 flex-col border-l-4 border-[#2348b4]">
            <MenuBar />
            <div className="flex shrink-0 flex-col gap-px border-b border-[#aca899]">
                <div className="flex gap-[2px]">
                    <Toolbar className="w-[391px]">
                        <Tools items={STANDARD} />
                    </Toolbar>
                    <Toolbar className="w-[241px]">
                        <Tool name="fontStyle" />
                        <Select label="Text style" value="DIM_FONT" className="w-[61px]" />
                        <Tool name="dimStyle" />
                        <Select label="Dimension style" value="_TCH_ARROW" className="w-[61px]" />
                        <Tool name="tableStyle" />
                        <Select label="Table style" value="Standard" className="w-[61px]" />
                    </Toolbar>
                    <Toolbar className="w-[342px]">
                        <Tools items={TARCH_SHORTCUTS} />
                    </Toolbar>
                </div>
                <div className="flex gap-[2px]">
                    <Toolbar className="w-[367px]">
                        <Tools items={TARCH_COMMON} />
                    </Toolbar>
                    <Toolbar className="w-[354px]">
                        <Select label="Color" value="ByLayer" prefix={<Swatch />} className="w-[89px]" />
                        <Select
                            label="Linetype"
                            value="ByLayer"
                            prefix={<Line className="w-[36px]" />}
                            className="ml-1 w-[96px]"
                        />
                        <Select
                            label="Lineweight"
                            value="ByLayer"
                            prefix={<Line className="w-[21px]" />}
                            className="ml-1 w-[75px]"
                        />
                        <Select label="Plot style" value="随颜色" disabled className="ml-1 w-[71px]" />
                    </Toolbar>
                </div>
                <div className="flex gap-[2px]">
                    <Toolbar className="w-[343px]">
                        <Tools items={TARCH_EXTRA} />
                    </Toolbar>
                    <Toolbar className="w-[108px]">
                        <Tools items={LAYER_TOOLS} />
                    </Toolbar>
                    <Toolbar className="w-[233px]">
                        <Tool name="layers" />
                        <Select
                            label="Layer"
                            value="0"
                            className="w-[179px]"
                            prefix={
                                <>
                                    <span className="flex shrink-0 gap-px">
                                        {["bulbOn", "sun", "vpLayer", "unlock"].map((name) => (
                                            <svg key={name} viewBox="0 0 16 16" className="h-[10px] w-[10px]">
                                                {ICONS[name]}
                                            </svg>
                                        ))}
                                    </span>
                                    <Swatch />
                                </>
                            }
                        />
                        <Tool name="layerSet" />
                        <Tool name="layerPrev" />
                    </Toolbar>
                </div>
            </div>
            <div className="flex min-h-0 flex-1">
                <Sidebar />
                <div className="flex min-w-0 flex-1 flex-col border-l border-[#6f6c5f]">
                    <DrawingTabs />
                    <main className="relative min-h-0 flex-1 overflow-hidden bg-black">
                        <BrickDrawing />
                        <UcsIcon />
                    </main>
                    <LayoutTabs />
                    <div className="h-[4px] shrink-0 border-t border-[#f8f7f0]" />
                    <CommandLine />
                </div>
            </div>
        </div>
        <div className="absolute top-[122px] -left-4 flex h-7 w-7 items-center justify-end rounded-full border border-[#c9e8c9] bg-[#43b356] pr-[2px] font-['Liberation_Sans',sans-serif] text-[7px] font-bold text-white">
            50
        </div>
        <Watermark />
    </div>
);

export default App;
